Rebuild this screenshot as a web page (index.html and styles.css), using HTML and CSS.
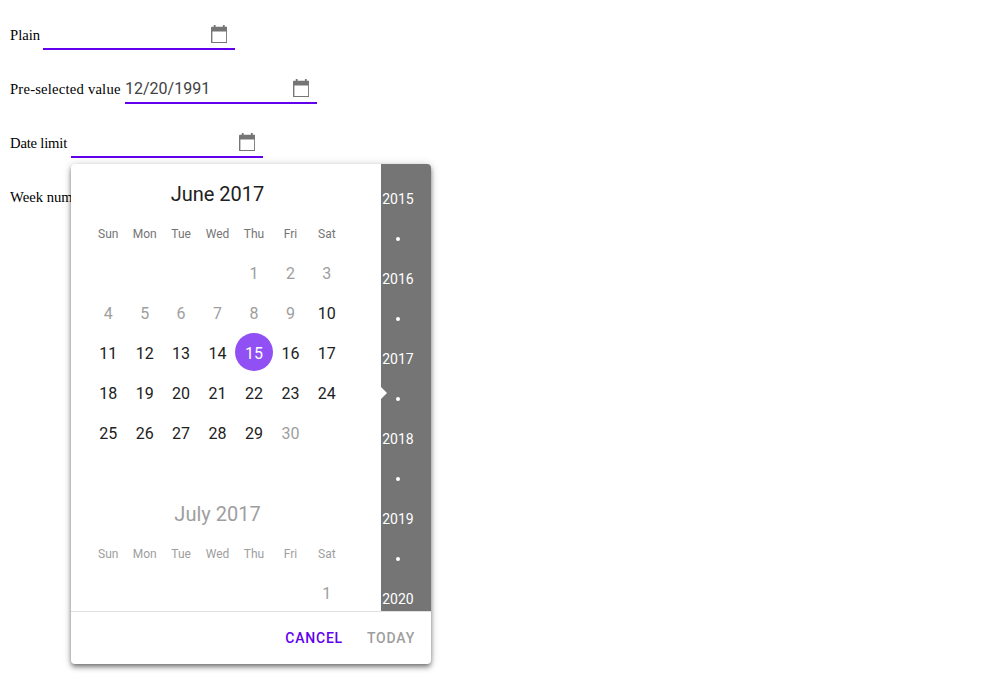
FILE: index.html
```html
<!DOCTYPE html>
<html lang="en">
  <head>
    <meta charset="UTF-8" />
    <title>Date Picker</title>
    <link rel="stylesheet" href="styles.css">
  </head>
  <body>
    <div class="row">
      <label class="label-plain">Plain</label>
      <div class="field">
        <span class="value"></span>
        <svg class="cal-icon" viewBox="0 0 18 20"><path d="M17 2h-2V0h-2v2H5V0H3v2H1C.4 2 0 2.400 0 3v16c0 .6.4 1 1 1h16c.6 0 1-.4 1-1V3c0-.6-.4-1-1-1zm-.5 16.500h-15V7h15v11.500z"/></svg>
      </div>
    </div>
    <div class="row">
      <label class="label-preselected">Pre-selected value</label>
      <div class="field">
        <span class="value">12/20/1991</span>
        <svg class="cal-icon" viewBox="0 0 18 20"><path d="M17 2h-2V0h-2v2H5V0H3v2H1C.4 2 0 2.400 0 3v16c0 .6.4 1 1 1h16c.6 0 1-.4 1-1V3c0-.6-.4-1-1-1zm-.5 16.500h-15V7h15v11.500z"/></svg>
      </div>
    </div>
    <div class="row">
      <label class="label-limit">Date limit</label>
      <div class="field">
        <span class="value"></span>
        <svg class="cal-icon" viewBox="0 0 18 20"><path d="M17 2h-2V0h-2v2H5V0H3v2H1C.4 2 0 2.400 0 3v16c0 .6.4 1 1 1h16c.6 0 1-.4 1-1V3c0-.6-.4-1-1-1zm-.5 16.500h-15V7h15v11.500z"/></svg>
      </div>
    </div>
    <div class="row">
      <label>Week numbers</label>
    </div>

    <div class="overlay">
      <div class="overlay-body">
        <div class="months">
          <section class="month">
            <h3 class="month-title">June 2017</h3>
            <div class="week-days">
              <span>Sun</span><span>Mon</span><span>Tue</span><span>Wed</span><span>Thu</span><span>Fri</span><span>Sat</span>
            </div>
            <div class="days">
              <span></span><span></span><span></span><span></span>
              <span class="off">1</span><span class="off">2</span><span class="off">3</span>
              <span class="off">4</span><span class="off">5</span><span class="off">6</span><span class="off">7</span><span class="off">8</span><span class="off">9</span><span>10</span>
              <span>11</span><span>12</span><span>13</span><span>14</span><span class="selected">15</span><span>16</span><span>17</span>
              <span>18</span><span>19</span><span>20</span><span>21</span><span>22</span><span>23</span><span>24</span>
              <span>25</span><span>26</span><span>27</span><span>28</span><span>29</span><span class="off">30</span>
            </div>
          </section>
          <section class="month month-next">
            <h3 class="month-title">July 2017</h3>
            <div class="week-days">
              <span>Sun</span><span>Mon</span><span>Tue</span><span>Wed</span><span>Thu</span><span>Fri</span><span>Sat</span>
            </div>
            <div class="days">
              <span></span><span></span><span></span><span></span><span></span><span></span>
              <span>1</span>
            </div>
          </section>
        </div>
        <div class="years">
          <div class="year">2015</div><div class="dot"></div>
          <div class="year">2016</div><div class="dot"></div>
          <div class="year">2017</div><div class="dot"></div>
          <div class="year">2018</div><div class="dot"></div>
          <div class="year">2019</div><div class="dot"></div>
          <div class="year">2020</div>
          <div class="notch"></div>
        </div>
      </div>
      <div class="overlay-footer">
        <button class="btn btn-cancel">Cancel</button>
        <button class="btn btn-today">Today</button>
      </div>
    </div>
  </body>
</html>
```

FILE: styles.css
```css
body {
  margin: 0;
  padding: 17px 10px 0;
  font-family: "Liberation Serif", serif;
  font-size: 14.67px;
  color: #000;
  background-color: #fff;
}
.row {
  display: flex;
  align-items: flex-end;
  height: 33px;
  margin-bottom: 21px;
}
.row label {
  flex: none;
  padding-bottom: 6px;
}
.label-plain {
  width: 33px;
}
.label-preselected {
  width: 115px;
  letter-spacing: 0.2px;
}
.label-limit {
  width: 61px;
  letter-spacing: -0.2px;
}
.field {
  display: flex;
  align-items: center;
  justify-content: space-between;
  box-sizing: border-box;
  width: 192px;
  height: 33px;
  padding: 3px 8px 0 0;
  border-bottom: 2px solid #6200ee;
  font-family: Roboto, sans-serif;
  font-size: 16px;
  color: #424242;
}
.cal-icon {
  width: 16.5px;
  height: 18.300px;
  fill: #757575;
}
.overlay {
  position: absolute;
  left: 71px;
  top: 164px;
  width: 360px;
  height: 500px;
  border-radius: 4px;
  background-color: #fff;
  box-shadow: 0 2px 4px -1px rgba(0, 0, 0, 0.38), 0 4px 5px 0 rgba(0, 0, 0, 0.24), 0 1px 10px 0 rgba(0, 0, 0, 0.2);
  font-family: Roboto, sans-serif;
  overflow: hidden;
}
.overlay-body {
  display: flex;
  height: 447px;
}
.months {
  width: 310px;
  overflow: hidden;
}
.month {
  box-sizing: border-box;
  height: 320px;
  padding: 0 36px 0 19px;
  text-align: center;
}
.month-title {
  margin: 0;
  padding-top: 17px;
  height: 43px;
  font-size: 20px;
  font-weight: 400;
  line-height: 26px;
  color: #212121;
}
.week-days,
.days {
  display: grid;
  grid-template-columns: repeat(7, 36.45px);
}
.week-days {
  height: 20px;
  font-size: 12px;
  line-height: 20px;
  color: #757575;
}
.days {
  grid-auto-rows: 40px;
  margin-top: 10px;
  font-size: 16px;
  line-height: 40px;
  color: #212121;
}
.days span {
  position: relative;
  z-index: 0;
}
.off {
  color: #9e9e9e;
}
.selected {
  color: #fff;
}
.selected::before {
  content: "";
  position: absolute;
  z-index: -1;
  left: -0.75px;
  top: -1px;
  width: 38px;
  height: 38px;
  border-radius: 50%;
  background-color: #9150f3;
}
.month-next .month-title,
.month-next .week-days,
.month-next .days {
  color: #9e9e9e;
}
.years {
  position: relative;
  width: 50px;
  padding-top: 15px;
  box-sizing: border-box;
  background-color: #757575;
  color: #fff;
  font-size: 14px;
  text-align: center;
  overflow: hidden;
}
.year {
  width: 34px;
  height: 40px;
  line-height: 41px;
}
.dot {
  height: 40px;
  position: relative;
}
.dot::after {
  content: "";
  position: absolute;
  left: 15px;
  top: 18px;
  width: 4px;
  height: 4px;
  border-radius: 50%;
  background-color: #fff;
}
.notch {
  position: absolute;
  left: 0;
  top: 223px;
  width: 0;
  height: 0;
  border-top: 6px solid transparent;
  border-bottom: 6px solid transparent;
  border-left: 6px solid #fff;
}
.overlay-footer {
  display: flex;
  justify-content: flex-end;
  align-items: center;
  gap: 8px;
  box-sizing: border-box;
  height: 53px;
  padding-right: 8px;
  border-top: 1px solid #e0e0e0;
}
.btn {
  padding: 0 8px;
  height: 36px;
  border: 0;
  background: none;
  font-family: Roboto, sans-serif;
  font-size: 14px;
  font-weight: 500;
  letter-spacing: 0.8px;
  text-transform: uppercase;
}
.btn-cancel {
  color: #6200ee;
}
.btn-today {
  color: #9e9e9e;
}
```
